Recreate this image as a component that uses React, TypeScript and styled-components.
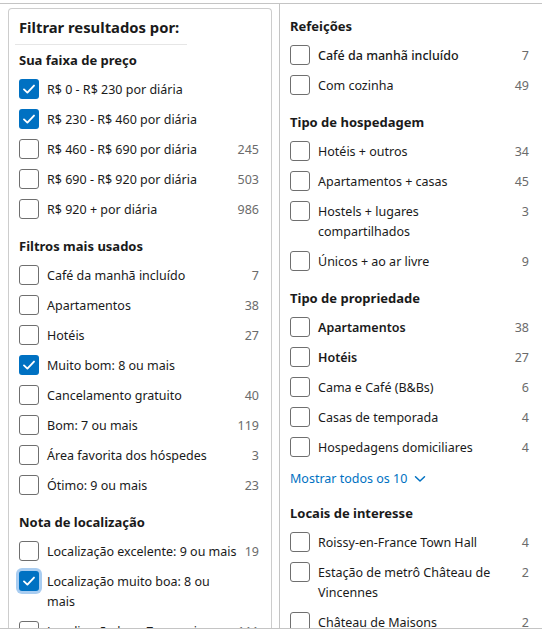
import React from "react";
import styled, { createGlobalStyle } from "styled-components";

const GlobalStyle = createGlobalStyle`
  html, body { margin: 0; padding: 0; background: #ffffff; }
  body { font-family: "Noto Sans", "Open Sans", sans-serif; color: #1a1a1a; }
  * { box-sizing: border-box; }
`;

const Frame = styled.div`
  margin-top: 3px;
  height: 626px;
  border-top: 1px solid #c4c4c4;
  border-bottom: 1px solid #c4c4c4;
  display: grid;
  grid-template-columns: 279px 1fr;
  overflow: hidden;
`;

const LeftCol = styled.div`
  padding: 4px 7px 0 8px;
  overflow: hidden;
`;

const FilterBox = styled.div`
  border: 1px solid #cdcdcd;
  border-bottom: none;
  border-radius: 4px 4px 0 0;
  padding: 6px 12px 0 10px;
  height: 640px;
`;

const RightCol = styled.div`
  border-left: 1px solid #c4c4c4;
  padding: 12px 13px 0 10px;
  overflow: hidden;
`;

const Title = styled.h2`
  margin: 0;
  font-size: 14.8px;
  line-height: 24px;
  font-weight: 700;
`;

const Separator = styled.div`
  margin: 5px 0 0 -4px;
  width: 172px;
  height: 1px;
  background: #e6e6e6;
`;

const Section = styled.section<{ $gap: number }>`
  margin-top: ${(p) => p.$gap}px;
`;

const Heading = styled.h3`
  margin: 0;
  font-size: 13px;
  line-height: 20px;
  font-weight: 700;
`;

const List = styled.div`
  margin-top: 9px;
  display: flex;
  flex-direction: column;
  gap: 10px;
`;

const Row = styled.label`
  display: flex;
  align-items: flex-start;
  font-size: 12.5px;
  line-height: 20px;
  padding-top: 1px;
  margin-bottom: -1px;
`;

const Box = styled.span<{ $checked?: boolean; $focus?: boolean }>`
  flex: none;
  width: 20px;
  height: 20px;
  margin-top: -1px;
  border-radius: 3px;
  border: ${(p) => (p.$checked ? "none" : "1.5px solid #6f6f6f")};
  background: ${(p) => (p.$checked ? "#0071c2" : "#ffffff")};
  box-shadow: ${(p) => (p.$focus ? "0 0 0 3px #a9cdf1" : "none")};
  display: flex;
  align-items: center;
  justify-content: center;
  margin-right: 8px;
`;

const Text = styled.span<{ $weight?: number }>`
  flex: 1;
  font-weight: ${(p) => p.$weight ?? 400};
  color: #1a1a1a;
`;

const Count = styled.span`
  flex: none;
  min-width: 16px;
  margin-left: 4px;
  text-align: right;
  color: #6b6b6b;
`;

const ShowAll = styled.a`
  display: flex;
  align-items: center;
  gap: 7px;
  margin-top: 12px;
  margin-bottom: -3px;
  font-size: 12.5px;
  line-height: 20px;
  color: #0071c2;
  text-decoration: none;
  cursor: pointer;
`;

type Item = { label: string; count?: number; checked?: boolean; weight?: number; focus?: boolean };
type Group = { title: string; items: Item[]; more?: string };

const Check = () => (
  <svg width="14" height="14" viewBox="0 0 14 14" aria-hidden>
    <path d="M2 7.4 L5.4 10.6 L12 3.6" fill="none" stroke="#fff" strokeWidth="1.9" strokeLinecap="round" strokeLinejoin="round" />
  </svg>
);

const Chevron = () => (
  <svg width="12" height="8" viewBox="0 0 12 8" aria-hidden>
    <path d="M1.5 1.8 L6 6 L10.5 1.8" fill="none" stroke="#0071c2" strokeWidth="1.5" strokeLinecap="round" strokeLinejoin="round" />
  </svg>
);

const leftGroups: Group[] = [
  {
    title: "Sua faixa de preço",
    items: [
      { label: "R$ 0 - R$ 230 por diária", checked: true },
      { label: "R$ 230 - R$ 460 por diária", checked: true },
      { label: "R$ 460 - R$ 690 por diária", count: 245 },
      { label: "R$ 690 - R$ 920 por diária", count: 503 },
      { label: "R$ 920 + por diária", count: 986 },
    ],
  },
  {
    title: "Filtros mais usados",
    items: [
      { label: "Café da manhã incluído", count: 7 },
      { label: "Apartamentos", count: 38 },
      { label: "Hotéis", count: 27 },
      { label: "Muito bom: 8 ou mais", checked: true },
      { label: "Cancelamento gratuito", count: 40 },
      { label: "Bom: 7 ou mais", count: 119 },
      { label: "Área favorita dos hóspedes", count: 3 },
      { label: "Ótimo: 9 ou mais", count: 23 },
    ],
  },
  {
    title: "Nota de localização",
    items: [
      { label: "Localização excelente: 9 ou mais", count: 19 },
      { label: "Localização muito boa: 8 ou mais", checked: true, focus: true },
      { label: "Localização boa: 7 ou mais", count: 111 },
    ],
  },
];

const rightGroups: Group[] = [
  {
    title: "Refeições",
    items: [
      { label: "Café da manhã incluído", count: 7, weight: 500 },
      { label: "Com cozinha", count: 49 },
    ],
  },
  {
    title: "Tipo de hospedagem",
    items: [
      { label: "Hotéis + outros", count: 34 },
      { label: "Apartamentos + casas", count: 45 },
      { label: "Hostels + lugares compartilhados", count: 3 },
      { label: "Únicos + ao ar livre", count: 9 },
    ],
  },
  {
    title: "Tipo de propriedade",
    items: [
      { label: "Apartamentos", count: 38, weight: 600 },
      { label: "Hotéis", count: 27, weight: 600 },
      { label: "Cama e Café (B&Bs)", count: 6 },
      { label: "Casas de temporada", count: 4 },
      { label: "Hospedagens domiciliares", count: 4 },
    ],
    more: "Mostrar todos os 10",
  },
  {
    title: "Locais de interesse",
    items: [
      { label: "Roissy-en-France Town Hall", count: 4 },
      { label: "Estação de metrô Château de Vincennes", count: 2 },
      { label: "Château de Maisons", count: 2 },
    ],
  },
];

const FilterGroup = ({ group, gap }: { group: Group; gap: number }) => (
  <Section $gap={gap}>
    <Heading>{group.title}</Heading>
    <List>
      {group.items.map((it) => (
        <Row key={it.label}>
          <Box $checked={it.checked} $focus={it.focus}>{it.checked && <Check />}</Box>
          <Text $weight={it.weight}>{it.label}</Text>
          <Count>{it.count ?? ""}</Count>
        </Row>
      ))}
    </List>
    {group.more && (
      <ShowAll>
        {group.more}
        <Chevron />
      </ShowAll>
    )}
  </Section>
);

export default function App() {
  return (
    <>
      <GlobalStyle />
      <Frame>
        <LeftCol>
          <FilterBox>
            <Title>Filtrar resultados por:</Title>
            <Separator />
            {leftGroups.map((g, i) => (
              <FilterGroup key={g.title} group={g} gap={i === 0 ? 5 : 17} />
            ))}
          </FilterBox>
        </LeftCol>
        <RightCol>
          {rightGroups.map((g, i) => (
            <FilterGroup key={g.title} group={g} gap={i === 0 ? 0 : 17} />
          ))}
        </RightCol>
      </Frame>
    </>
  );
}
